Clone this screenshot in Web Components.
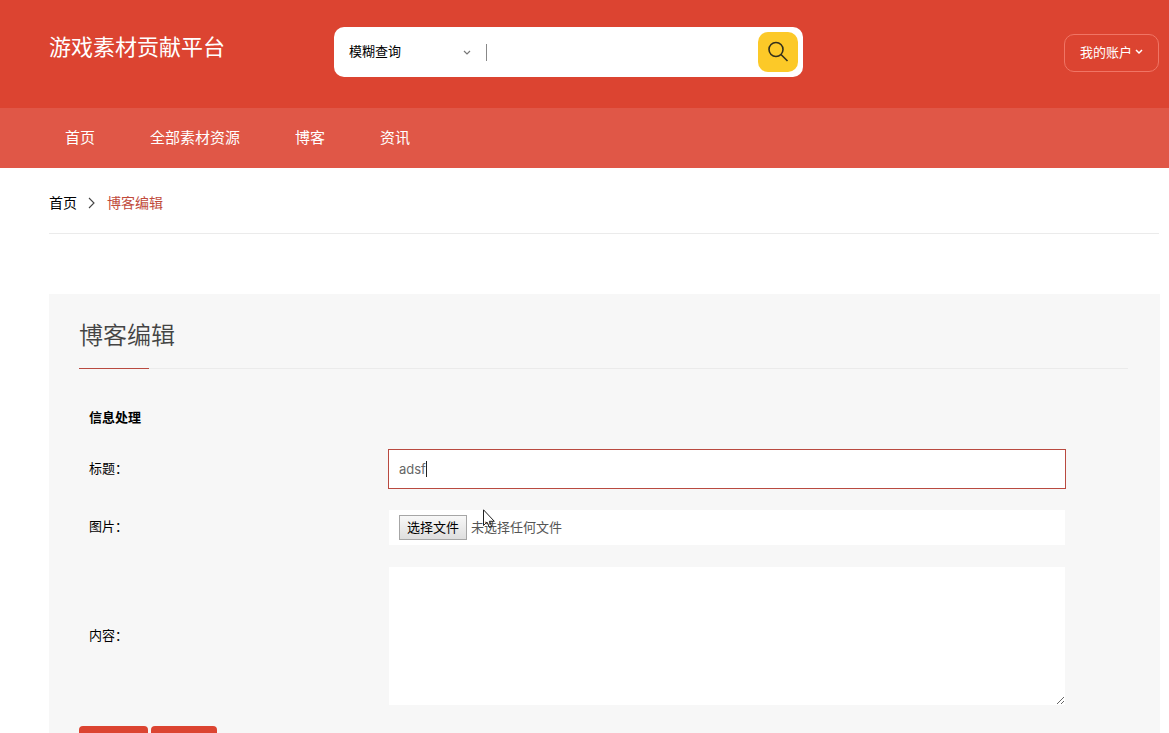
<!DOCTYPE html>
<html lang="zh-CN">
<head>
<meta charset="utf-8">
<meta name="viewport" content="width=device-width, initial-scale=1">
<title>游戏素材贡献平台</title>
<style>
  html { scrollbar-width: none; }
  body {
    margin: 0;
    background: #fff;
    color: #000;
    font: 13px/20px Inter, "Noto Sans CJK SC", sans-serif;
    --brand: #dc4431;
    --nav: #e05747;
    --line: #ebebeb;
    --accent: #b94a40;
    --panel: #f7f7f7;
    --start: 49px;
    --end: 10px;
  }
</style>
</head>
<body>
<blog-page></blog-page>

<template id="search-bar">
  <style>
    :host { display: block; }
    form { display: flex; align-items: center; height: 50px; box-sizing: border-box; padding: 0 5px 0 15px; background: #fff; border-radius: 10px; }
    .scope { position: relative; width: 137px; flex: none; display: flex; align-items: center; border-right: 1px solid #888; height: 17px; }
    select { appearance: none; border: 0; background: none; width: 100%; padding: 0 0 2px; margin: 0; font: inherit; color: #000; outline: 0; }
    .scope svg { position: absolute; right: 15px; top: 6px; pointer-events: none; }
    input { flex: 1; min-width: 0; border: 0; padding: 0 8px; font: inherit; background: none; outline: 0; }
    button { width: 40px; height: 40px; flex: none; display: grid; place-items: center; border: 0; padding: 0; border-radius: 10px; background: #fcc928; }
  </style>
  <form>
    <span class="scope">
      <select aria-label="查询方式"><option>模糊查询</option></select>
      <svg width="8" height="6" viewBox="0 0 8 6" fill="none" stroke="#777" stroke-width="1.2"><path d="M1 1l3 3 3-3"/></svg>
    </span>
    <input type="text" aria-label="关键词">
    <button type="button" aria-label="搜索">
      <svg width="22" height="22" viewBox="0 0 22 22" fill="none" stroke="#33301c" stroke-width="1.6"><circle cx="9" cy="8.5" r="7"/><path d="M14 13.5l6.500 6.500"/></svg>
    </button>
  </form>
</template>

<template id="site-header">
  <style>
    :host { display: grid; grid-template-columns: 285px minmax(0, 469px) 1fr; align-items: center; height: 108px; box-sizing: border-box; padding: 27px var(--end) 31px var(--start); background: var(--brand); color: #fff; }
    .brand { align-self: start; font-size: 22px; line-height: 40px; color: inherit; text-decoration: none; white-space: nowrap; }
    button { justify-self: end; display: flex; align-items: center; gap: 3px; height: 38px; box-sizing: border-box; margin: 2px 0 0; padding: 0 15px 2px; border: 1px solid #f07565; border-radius: 10px; background: none; color: inherit; font: inherit; white-space: nowrap; }
  </style>
  <a class="brand" href="#"><slot></slot></a>
  <search-bar></search-bar>
  <button type="button">我的账户
    <svg width="8" height="6" viewBox="0 0 8 6" fill="none" stroke="#fff" stroke-width="1.5"><path d="M1 1l3 3 3-3"/></svg>
  </button>
</template>

<template id="site-nav">
  <style>
    :host { display: block; background: var(--nav); }
    nav { display: flex; gap: 55px; padding: 0 var(--end) 0 65px; }
    ::slotted(a) { color: #fff; text-decoration: none; font-size: 15px; line-height: 60px; }
  </style>
  <nav><slot></slot></nav>
</template>

<template id="bread-crumb">
  <style>
    :host { display: block; padding: 0 var(--end) 0 var(--start); }
    nav { display: flex; align-items: center; padding: 25px 0 20px; border-bottom: 1px solid var(--line); font-size: 14px; }
    a { color: #000; text-decoration: none; }
    svg { margin: 0 11px; }
    .current { color: #c14a3b; }
  </style>
  <nav aria-label="位置">
    <a href="#">首页</a>
    <svg width="8" height="12" viewBox="0 0 8 12" fill="none" stroke="#444" stroke-width="1.1"><path d="M1 1l5 5-5 5"/></svg>
    <span class="current"><slot></slot></span>
  </nav>
</template>

<template id="form-row">
  <style>
    :host { display: grid; grid-template-columns: 299px minmax(0, 1fr); align-items: center; }
    .field { position: relative; display: grid; }
    ::slotted([slot="label"]) { padding-bottom: 3px; }
  </style>
  <slot name="label"></slot>
  <div class="field"><slot></slot></div>
</template>

<template id="file-picker">
  <style>
    :host { display: flex; align-items: center; position: relative; height: 37px; box-sizing: border-box; padding: 0 10px; border: 1px solid transparent; background: #fff padding-box; color: #555; }
    input { position: absolute; inset: 0; width: 100%; opacity: 0; }
    label { display: flex; align-items: center; gap: 4px; }
    .choose { box-sizing: border-box; height: 25px; line-height: 22px; padding: 0 7px; border: 1px solid #a6a6a6; background: linear-gradient(#f8f8f8, #dedede); color: #000; }
    .name { padding-bottom: 2px; }
  </style>
  <input type="file" id="file">
  <label for="file"><span class="choose">选择文件</span><span class="name">未选择任何文件</span></label>
</template>

<template id="mouse-pointer">
  <style>
    :host { position: absolute; left: 95px; top: 0; width: 13px; height: 20px; pointer-events: none; }
    svg { display: block; }
  </style>
  <svg width="13" height="20" viewBox="0 0 13 20" fill="none" stroke="#222"><path d="M.5 .8v15.700l3.500-3.400 2.500 5.500 2.300-1-2.500-5.300h5z"/></svg>
</template>

<template id="blog-form">
  <style>
    :host { display: block; margin: 60px 9px 0 var(--start); padding: 30px 32px 60px 30px; background: var(--panel); }
    h1 { position: relative; margin: 0; padding-bottom: 20px; border-bottom: 1px solid var(--line); font-size: 24px; line-height: 24px; font-weight: 350; color: #444; }
    h1::after { content: ""; position: absolute; left: 0; bottom: -1px; width: 70px; height: 1px; background: var(--accent); }
    form { display: grid; gap: 20px; margin-top: 38px; }
    h2 { margin: 0 0 2px 10px; font-size: 13px; line-height: 20px; font-weight: 700; }
    form-row { margin: 0 62px 0 10px; }
    input, textarea { box-sizing: border-box; width: 100%; border: 1px solid transparent; border-radius: 0; background: #fff padding-box; padding: 0 10px; font: inherit; color: #666; outline: 0; margin: 0; }
    input { height: 40px; border-color: var(--accent); caret-color: transparent; }
    textarea { height: 140px; padding: 10px; resize: both; }
    .caret { position: absolute; left: 38px; top: 12px; width: 1px; height: 16px; background: #222; }
    .actions { display: flex; gap: 3px; }
    button { width: 69px; height: 38px; border: 0; border-radius: 4px; background: var(--brand); }
    button + button { width: 66px; }
  </style>
  <h1><slot></slot></h1>
  <form>
    <h2>信息处理</h2>
    <form-row>
      <label slot="label" for="title">标题：</label>
      <input id="title" type="text" value="adsf"><span class="caret"></span>
    </form-row>
    <form-row>
      <span slot="label">图片：</span>
      <file-picker></file-picker><mouse-pointer></mouse-pointer>
    </form-row>
    <form-row>
      <label slot="label" for="content">内容：</label>
      <textarea id="content"></textarea>
    </form-row>
    <div class="actions">
      <button type="button" aria-label="提交"></button>
      <button type="button" aria-label="重置"></button>
    </div>
  </form>
</template>

<template id="blog-page">
  <style>:host { display: block; }</style>
  <site-header>游戏素材贡献平台</site-header>
  <site-nav>
    <a href="#">首页</a><a href="#">全部素材资源</a><a href="#">博客</a><a href="#">资讯</a>
  </site-nav>
  <main>
    <bread-crumb>博客编辑</bread-crumb>
    <blog-form>博客编辑</blog-form>
  </main>
</template>

<script>
  class TemplateElement extends HTMLElement {
    constructor() {
      super();
      const template = document.getElementById(this.localName);
      this.attachShadow({ mode: "open" }).append(document.importNode(template.content, true));
    }
  }
  for (const name of ["search-bar", "site-header", "site-nav", "bread-crumb", "form-row", "file-picker", "mouse-pointer", "blog-form", "blog-page"]) {
    customElements.define(name, class extends TemplateElement {});
  }
</script>
</body>
</html>
